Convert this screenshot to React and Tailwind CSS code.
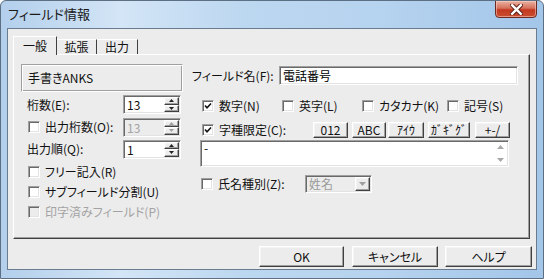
import React from 'react';

const sunken =
    'border border-t-[#a0a0a0] border-l-[#a0a0a0] border-b-white border-r-white shadow-[inset_1px_1px_0_#696969,inset_-1px_-1px_0_#e3e3e3]';
const raised =
    'border border-t-white border-l-white border-b-[#404040] border-r-[#404040] shadow-[inset_-1px_-1px_0_#a0a0a0,inset_1px_1px_0_#f4f4f4] bg-[#ececec]';

function Check({ checked, disabled }) {
    return (
        <span
            className={`relative block w-[12px] h-[12px] shrink-0 ${sunken} ${
                disabled ? 'bg-[#ececec]' : 'bg-white'
            }`}
        >
            {checked && (
                <svg
                    viewBox="0 0 10 10"
                    className="absolute left-[0px] top-[0px] w-[10px] h-[10px]"
                >
                    <path
                        d="M2 4.5 L4 6.8 L8 2.5"
                        fill="none"
                        stroke="#111"
                        strokeWidth="1.6"
                    />
                </svg>
            )}
        </span>
    );
}

function CheckLabel({ checked, disabled, children, className = '' }) {
    return (
        <div className={`flex items-center gap-[5px] ${className}`}>
            <Check checked={checked} disabled={disabled} />
            <span className={disabled ? 'text-[#a3a3a3]' : 'text-[#111]'}>
                {children}
            </span>
        </div>
    );
}

function Arrow({ up, color = '#222', small }) {
    return (
        <svg
            viewBox="0 0 7 4"
            className={small ? 'w-[5px] h-[3px]' : 'w-[7px] h-[4px]'}
        >
            <path d={up ? 'M0 4 L3.5 0 L7 4 Z' : 'M0 0 L7 0 L3.5 4 Z'} fill={color} />
        </svg>
    );
}

function Spin({ value, disabled }) {
    const c = disabled ? '#a0a0a0' : '#222';
    return (
        <div
            className={`flex w-[58px] h-[19px] ${sunken} ${
                disabled ? 'bg-[#ececec]' : 'bg-white'
            }`}
        >
            <span
                className={`flex-1 pl-[3px] leading-[17px] text-[12px] ${
                    disabled ? 'text-[#a3a3a3]' : 'text-[#111]'
                }`}
            >
                {value}
            </span>
            <div className="flex flex-col w-[15px] my-[1px] mr-[1px]">
                <div className={`flex-1 flex items-center justify-center ${raised}`}>
                    <Arrow up small color={c} />
                </div>
                <div className={`flex-1 flex items-center justify-center ${raised}`}>
                    <Arrow small color={c} />
                </div>
            </div>
        </div>
    );
}

function Btn({ children, className = '' }) {
    return (
        <div
            className={`flex items-center justify-center text-[#111] ${raised} ${className}`}
        >
            {children}
        </div>
    );
}

export default function App() {
    return (
        <div
            lang="ja"
            className="w-[544px] h-[279px] flex flex-col overflow-hidden font-['Noto_Sans_CJK_JP','Noto_Sans',sans-serif] [font-feature-settings:'palt'] text-[12px] leading-none bg-[linear-gradient(90deg,#b3cfec_0%,#d3e5f6_22%,#bcd7f0_45%,#b6d3ef_70%,#a3c6e9_100%)] border border-[#5d6f82] rounded-t-[6px]"
        >
            {/* Title bar */}
            <div className="flex justify-between h-[27px] shrink-0">
                <div className="pl-[7px] pt-[6px] text-[13px] text-[#1a1a1a]">
                    フィールド情報
                </div>
                <div className="mr-[6px] w-[42px] h-[18px] -mt-px rounded-b-[4px] border border-[#6e2a20] bg-[linear-gradient(180deg,#eab3a2_0%,#d6705b_45%,#c3391f_55%,#c94e30_100%)] flex items-center justify-center shadow-[inset_0_0_0_1px_rgba(255,220,210,0.5)]">
                    <svg viewBox="0 0 12 10" className="w-[13px] h-[11px]">
                        <path
                            d="M2 1 L10 9 M10 1 L2 9"
                            stroke="#5a1d14"
                            strokeWidth="4"
                            strokeLinecap="square"
                        />
                        <path
                            d="M2 1 L10 9 M10 1 L2 9"
                            stroke="#ffffff"
                            strokeWidth="2.2"
                            strokeLinecap="square"
                        />
                    </svg>
                </div>
            </div>

            {/* Client area */}
            <div className="mx-[6px] mb-[8px] flex-1 flex flex-col bg-[#ececec] border border-[#6a7c90]">
                {/* Tabs */}
                <div className="flex items-end h-[25px] pl-[5px] pt-[6px]">
                    <div className="h-[19px] w-[44px] flex items-center justify-center border-t border-l border-white border-r border-r-[#404040] bg-[#ececec] relative z-10 -mb-px text-[#111]">
                        一般
                    </div>
                    <div className="h-[15px] w-[40px] flex items-center justify-center border-t border-white border-r border-r-[#404040] text-[#111]">
                        拡張
                    </div>
                    <div className="h-[15px] w-[41px] flex items-center justify-center border-t border-white border-r border-r-[#404040] text-[#111]">
                        出力
                    </div>
                </div>

                {/* Tab panel */}
                <div className="ml-[5px] mr-[6px] h-[185px] flex border border-t-white border-l-white border-b-[#404040] border-r-[#404040] shadow-[inset_-1px_-1px_0_#a0a0a0]">
                    {/* Left column */}
                    <div className="w-[162px] ml-[7px] pt-[9px] flex flex-col">
                        <div className="h-[28px] flex items-center pl-[6px] border border-t-[#a0a0a0] border-l-[#a0a0a0] border-b-white border-r-white shadow-[inset_1px_1px_0_#fff,inset_-1px_-1px_0_#a0a0a0] text-[#111]">
                            手書きANKS
                        </div>
                        <div className="h-[23px] mt-[1px] flex items-center justify-between pl-[6px] pr-[2px]">
                            <span className="text-[#111]">桁数(E):</span>
                            <Spin value="13" />
                        </div>
                        <div className="h-[22px] flex items-center justify-between pl-[7px] pr-[2px]">
                            <CheckLabel>出力桁数(O):</CheckLabel>
                            <Spin value="13" disabled />
                        </div>
                        <div className="h-[22px] flex items-center justify-between pl-[6px] pr-[2px]">
                            <span className="text-[#111]">出力順(Q):</span>
                            <Spin value="1" />
                        </div>
                        <div className="h-[21px] mt-[1px] flex items-center pl-[7px]">
                            <CheckLabel>フリー記入(R)</CheckLabel>
                        </div>
                        <div className="h-[19px] flex items-center pl-[7px]">
                            <CheckLabel>サブフィールド分割(U)</CheckLabel>
                        </div>
                        <div className="h-[21px] flex items-center pl-[7px]">
                            <CheckLabel disabled>印字済みフィールド(P)</CheckLabel>
                        </div>
                    </div>

                    {/* Right column */}
                    <div className="flex-1 ml-[9px] mr-[11px] pt-[11px] flex flex-col">
                        <div className="flex items-center justify-between h-[19px]">
                            <span className="text-[#111]">フィールド名(F):</span>
                            <div className={`w-[239px] h-[19px] bg-white pl-[3px] flex items-center ${sunken}`}>
                                電話番号
                            </div>
                        </div>
                        <div className="flex items-center h-[18px] mt-[12px] pl-[10px]">
                            <CheckLabel checked className="w-[80px]">数字(N)</CheckLabel>
                            <CheckLabel className="w-[80px]">英字(L)</CheckLabel>
                            <CheckLabel className="w-[85px]">カタカナ(K)</CheckLabel>
                            <CheckLabel>記号(S)</CheckLabel>
                        </div>
                        <div className="flex items-center h-[16px] mt-[7px] pl-[10px]">
                            <CheckLabel checked className="w-[111px]">字種限定(C):</CheckLabel>
                            <Btn className="w-[35px] h-[16px]">012</Btn>
                            <Btn className="w-[34px] h-[16px] ml-[4px]">ABC</Btn>
                            <Btn className="w-[36px] h-[16px] ml-[2px]">ｱｲｳ</Btn>
                            <Btn className="w-[42px] h-[16px] ml-[4px]">ｶﾞｷﾞｸﾞ</Btn>
                            <Btn className="w-[35px] h-[16px] ml-[5px]">+-/</Btn>
                        </div>
                        <div className={`flex w-[309px] h-[27px] ml-[8px] mt-[2px] bg-white ${sunken}`}>
                            <span className="flex-1 pl-[3px] pt-[1px] text-[#111]">-</span>
                            <div className="w-[14px] flex flex-col items-center justify-between py-[4px] mr-[1px]">
                                <Arrow up color="#a8a8a8" />
                                <Arrow color="#a8a8a8" />
                            </div>
                        </div>
                        <div className="flex items-center h-[18px] mt-[8px] pl-[9px]">
                            <CheckLabel className="w-[104px]">氏名種別(Z):</CheckLabel>
                            <div className={`flex w-[67px] h-[18px] bg-[#ececec] ${sunken}`}>
                                <span className="flex-1 pl-[3px] flex items-center text-[#9a9a9a]">
                                    姓名
                                </span>
                                <div className={`w-[15px] my-[1px] mr-[1px] flex items-center justify-center ${raised}`}>
                                    <Arrow color="#a0a0a0" />
                                </div>
                            </div>
                        </div>
                    </div>
                </div>

                {/* Dialog buttons */}
                <div className="flex justify-end mt-[7px] pr-[4px] gap-[7px]">
                    <Btn className="w-[85px] h-[21px] mr-[1px]">OK</Btn>
                    <Btn className="w-[86px] h-[21px]">キャンセル</Btn>
                    <Btn className="w-[87px] h-[21px]">ヘルプ</Btn>
                </div>
            </div>
        </div>
    );
}
